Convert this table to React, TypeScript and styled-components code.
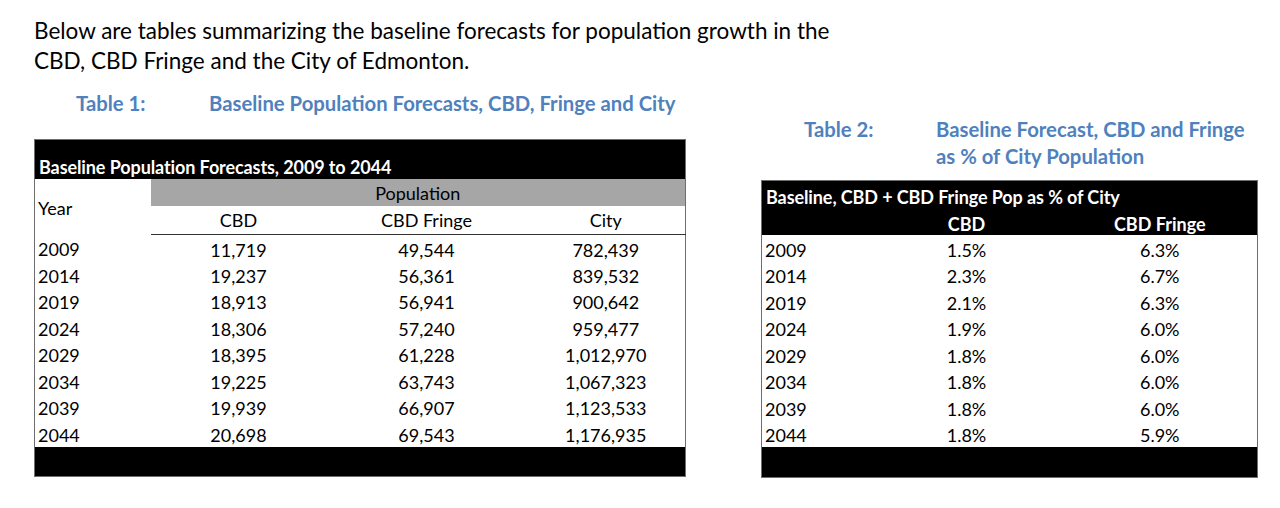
import React from "react";
import styled, { createGlobalStyle } from "styled-components";

const GlobalStyle = createGlobalStyle`
  body {
    margin: 0;
    background: #ffffff;
    font-family: Lato, "Open Sans", sans-serif;
    color: #000000;
  }
`;

const Page = styled.div`
  width: 1280px;
  height: 508px;
  padding: 16px 0 0 34px;
  box-sizing: border-box;
`;

const Intro = styled.p`
  margin: 0;
  width: 815px;
  font-size: 22.5px;
  line-height: 30px;
`;

const Figures = styled.div`
  display: flex;
  align-items: flex-start;
  margin-top: 14px;
`;

const Figure = styled.div<{ $width: number; $offset: number; $gap: number }>`
  width: ${(p) => p.$width}px;
  margin-top: ${(p) => p.$offset}px;
  margin-right: ${(p) => p.$gap}px;
`;

const Caption = styled.div<{ $indent: number; $labelWidth: number }>`
  display: grid;
  grid-template-columns: ${(p) => p.$labelWidth}px 1fr;
  padding-left: ${(p) => p.$indent}px;
  color: #4f81bd;
  font-weight: 700;
  font-size: 20.3px;
  line-height: 27px;
`;

const Table = styled.table`
  width: 100%;
  border-collapse: collapse;
  border: 1.5px solid #6e6e6e;
  font-size: 18px;
  table-layout: fixed;
`;

const Band = styled.td<{ $height: number }>`
  height: ${(p) => p.$height}px;
  padding: 0 0 2px 4px;
  background: #000000;
  color: #ffffff;
  font-weight: 700;
  vertical-align: bottom;
  line-height: 20px;
  letter-spacing: -0.1px;
`;

const GroupHead = styled.td`
  height: 26px;
  padding: 1px 0 0;
  background: #a6a6a6;
  text-align: center;
  vertical-align: middle;
`;

const YearHead = styled.td`
  padding: 2px 0 0 3px;
  vertical-align: middle;
  text-align: left;
`;

const ColHead = styled.td<{ $dark?: boolean }>`
  height: ${(p) => (p.$dark ? 26 : 25)}px;
  padding: 0 0 ${(p) => (p.$dark ? 0 : 3)}px;
  text-align: center;
  vertical-align: bottom;
  line-height: 22px;
  background: ${(p) => (p.$dark ? "#000000" : "transparent")};
  color: ${(p) => (p.$dark ? "#ffffff" : "#000000")};
  font-weight: ${(p) => (p.$dark ? 700 : 400)};
  border-bottom: ${(p) => (p.$dark ? "none" : "1.5px solid #333333")};
`;

const Row = styled.tr`
  height: 26.5px;
`;

const YearCell = styled.td`
  padding: 3px 0 0 3px;
  text-align: left;
  vertical-align: middle;
`;

const Cell = styled.td`
  padding: 3px 0 0;
  text-align: center;
  vertical-align: middle;
`;

const popRows = [
  ["2009", "11,719", "49,544", "782,439"],
  ["2014", "19,237", "56,361", "839,532"],
  ["2019", "18,913", "56,941", "900,642"],
  ["2024", "18,306", "57,240", "959,477"],
  ["2029", "18,395", "61,228", "1,012,970"],
  ["2034", "19,225", "63,743", "1,067,323"],
  ["2039", "19,939", "66,907", "1,123,533"],
  ["2044", "20,698", "69,543", "1,176,935"],
];

const shareRows = [
  ["2009", "1.5%", "6.3%"],
  ["2014", "2.3%", "6.7%"],
  ["2019", "2.1%", "6.3%"],
  ["2024", "1.9%", "6.0%"],
  ["2029", "1.8%", "6.0%"],
  ["2034", "1.8%", "6.0%"],
  ["2039", "1.8%", "6.0%"],
  ["2044", "1.8%", "5.9%"],
];

const PopulationTable = () => (
  <Table>
    <colgroup>
      <col style={{ width: 116 }} />
      <col style={{ width: 176 }} />
      <col style={{ width: 200 }} />
      <col />
    </colgroup>
    <tbody>
      <tr>
        <Band colSpan={4} $height={37}>
          Baseline Population Forecasts, 2009 to 2044
        </Band>
      </tr>
      <tr>
        <YearHead rowSpan={2}>Year</YearHead>
        <GroupHead colSpan={3}>Population</GroupHead>
      </tr>
      <tr>
        <ColHead>CBD</ColHead>
        <ColHead>CBD Fringe</ColHead>
        <ColHead>City</ColHead>
      </tr>
      {popRows.map((r) => (
        <Row key={r[0]}>
          <YearCell>{r[0]}</YearCell>
          <Cell>{r[1]}</Cell>
          <Cell>{r[2]}</Cell>
          <Cell>{r[3]}</Cell>
        </Row>
      ))}
      <tr>
        <Band colSpan={4} $height={27} />
      </tr>
    </tbody>
  </Table>
);

const ShareTable = () => (
  <Table>
    <colgroup>
      <col style={{ width: 109 }} />
      <col style={{ width: 192 }} />
      <col />
    </colgroup>
    <tbody>
      <tr>
        <Band colSpan={3} $height={26}>
          Baseline, CBD + CBD Fringe Pop as % of City
        </Band>
      </tr>
      <tr>
        <ColHead $dark />
        <ColHead $dark>CBD</ColHead>
        <ColHead $dark>CBD Fringe</ColHead>
      </tr>
      {shareRows.map((r) => (
        <Row key={r[0]}>
          <YearCell>{r[0]}</YearCell>
          <Cell>{r[1]}</Cell>
          <Cell>{r[2]}</Cell>
        </Row>
      ))}
      <tr>
        <Band colSpan={3} $height={28} />
      </tr>
    </tbody>
  </Table>
);

export default function App() {
  return (
    <Page>
      <GlobalStyle />
      <Intro>
        Below are tables summarizing the baseline forecasts for population growth in the CBD,
        CBD Fringe and the City of Edmonton.
      </Intro>
      <Figures>
        <Figure $width={652} $offset={0} $gap={75}>
          <Caption $indent={42} $labelWidth={133}>
            <span>Table 1:</span>
            <span>Baseline Population Forecasts, CBD, Fringe and City</span>
          </Caption>
          <Figure $width={652} $offset={22} $gap={0}>
            <PopulationTable />
          </Figure>
        </Figure>
        <Figure $width={497} $offset={26} $gap={0}>
          <Caption $indent={43} $labelWidth={132}>
            <span>Table 2:</span>
            <span>
              Baseline Forecast, CBD and Fringe
              <br />
              as % of City Population
            </span>
          </Caption>
          <Figure $width={497} $offset={10} $gap={0}>
            <ShareTable />
          </Figure>
        </Figure>
      </Figures>
    </Page>
  );
}
